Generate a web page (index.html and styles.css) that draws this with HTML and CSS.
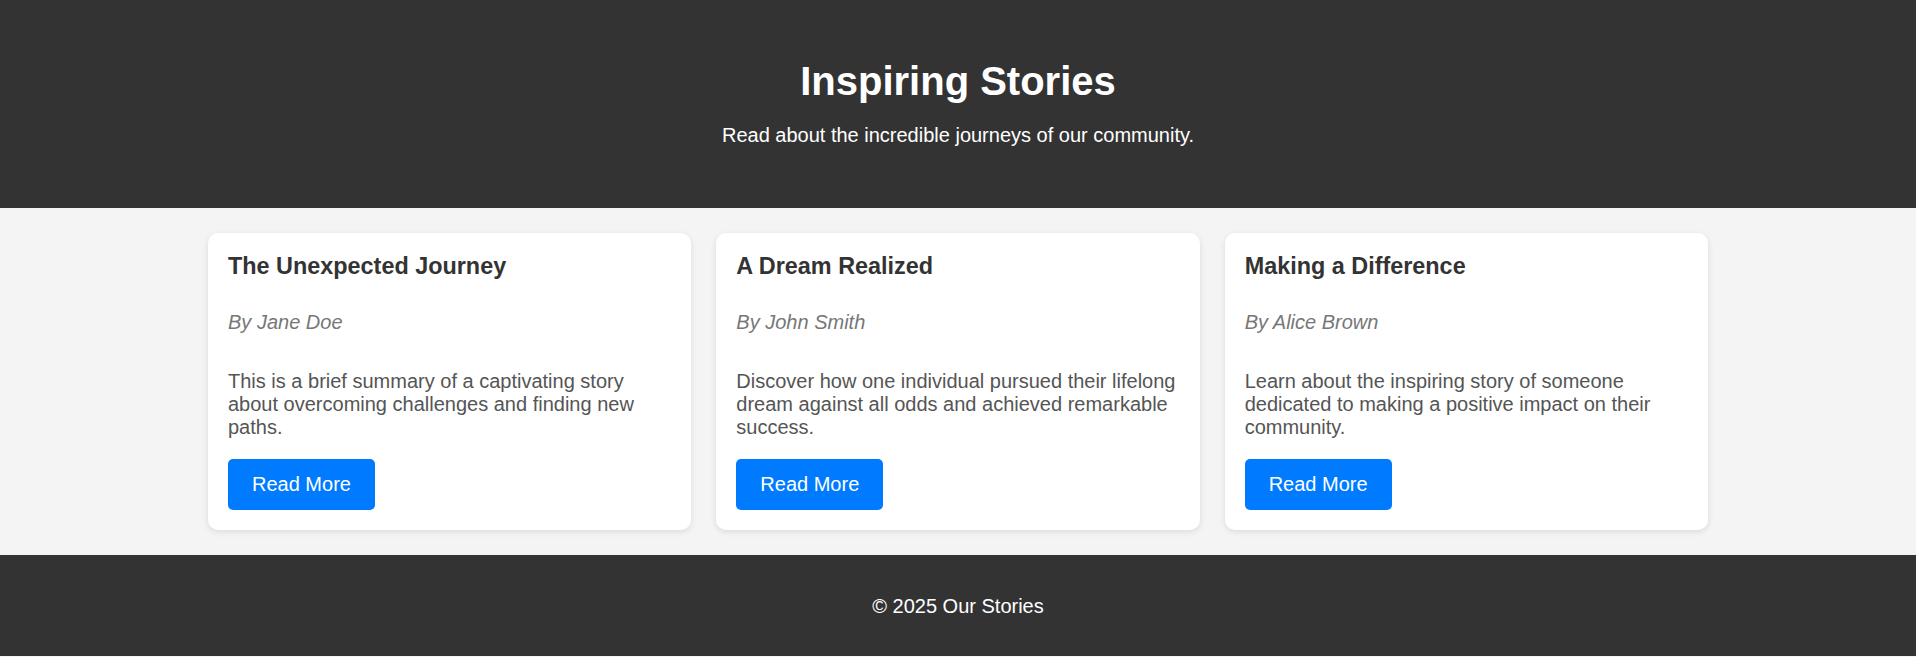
FILE: index.html
```html
<!DOCTYPE html>
<html lang="en">
<head>
<meta charset="utf-8">
<title>Inspiring Stories</title>
<link rel="stylesheet" href="styles.css">
</head>
<body>
<header class="site-header">
  <h1 class="site-title">Inspiring Stories</h1>
  <p class="site-tagline">Read about the incredible journeys of our community.</p>
</header>
<main class="stories">
  <article class="story-card">
    <h3 class="story-title">The Unexpected Journey</h3>
    <p class="story-author">By Jane Doe</p>
    <p class="story-summary">This is a brief summary of a captivating story about overcoming challenges and finding new paths.</p>
    <div class="story-actions"><a class="read-more" href="#">Read More</a></div>
  </article>
  <article class="story-card">
    <h3 class="story-title">A Dream Realized</h3>
    <p class="story-author">By John Smith</p>
    <p class="story-summary">Discover how one individual pursued their lifelong dream against all odds and achieved remarkable success.</p>
    <div class="story-actions"><a class="read-more" href="#">Read More</a></div>
  </article>
  <article class="story-card">
    <h3 class="story-title">Making a Difference</h3>
    <p class="story-author">By Alice Brown</p>
    <p class="story-summary">Learn about the inspiring story of someone dedicated to making a positive impact on their community.</p>
    <div class="story-actions"><a class="read-more" href="#">Read More</a></div>
  </article>
</main>
<footer class="site-footer">
  <p class="copyright">&copy; 2025 Our Stories</p>
</footer>
</body>
</html>
```

FILE: styles.css
```css
* {
  box-sizing: border-box;
}

html, body {
  margin: 0;
  padding: 0;
}

body {
  font-family: "Liberation Sans", Arial, sans-serif;
  font-size: 20px;
  line-height: normal;
  background: #f4f4f4;
  color: #333;
}

.site-header {
  background: #333;
  color: #fff;
  text-align: center;
  padding: 58px 20px 61px;
  height: 208px;
}

.site-title {
  margin: 0 0 20px;
  font-size: 40px;
  font-weight: bold;
  line-height: 46px;
}

.site-tagline {
  margin: 0;
  font-size: 20px;
  line-height: 23px;
}

.stories {
  max-width: 1500px;
  margin: 0 auto;
  padding: 25px 0;
  display: grid;
  grid-template-columns: repeat(3, 1fr);
  gap: 25px;
}

.story-card {
  background: #fff;
  border-radius: 10px;
  box-shadow: 0 2px 6px rgba(0, 0, 0, 0.1);
  padding: 20px 20px 20px;
  display: flex;
  flex-direction: column;
}

.story-title {
  margin: 0 0 31px;
  font-size: 23.4px;
  line-height: 27px;
  font-weight: bold;
  color: #333;
}

.story-author {
  margin: 0 0 36px;
  font-style: italic;
  color: #777;
  line-height: 23px;
}

.story-summary {
  margin: 0 0 20px;
  color: #555;
  line-height: 23px;
}

.story-actions {
  display: flex;
}

.read-more {
  display: inline-block;
  background: #007bff;
  color: #fff;
  text-decoration: none;
  font-size: 20px;
  line-height: 23px;
  padding: 14px 24px;
  border-radius: 5px;
}

.site-footer {
  background: #333;
  color: #fff;
  text-align: center;
  padding: 40px 20px 38px;
}

.copyright {
  margin: 0;
  line-height: 23px;
}
```
